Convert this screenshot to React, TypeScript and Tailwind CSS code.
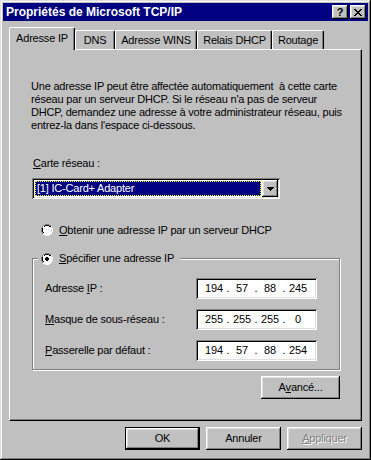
const raised =
  'shadow-[inset_-1px_-1px_0_#000,inset_1px_1px_0_#fff,inset_-2px_-2px_0_#808080,inset_2px_2px_0_#dfdfdf]';
const sunken =
  'shadow-[inset_1px_1px_0_#808080,inset_-1px_-1px_0_#fff,inset_2px_2px_0_#000,inset_-2px_-2px_0_#dfdfdf]';

function Radio({ checked }: { checked?: boolean }) {
  return (
    <svg width="12" height="12" viewBox="0 0 12 12" className="shrink-0">
      {/* outer ring: dark top-left, white bottom-right */}
      <path d="M4 0h4v1h2v1h1v2h1v4h-1v2h-1v1h-2v1h-4v-1h-2v-1h-1v-2h-1v-4h1v-2h1v-1h2z" fill="#fff" />
      <path d="M4 0h4v1h2v1h-2v-1h-4v1h-2v2h-1v4h1v2h-1v-2h-1v-4h1v-2h1v-1h2z" fill="#808080" />
      <path d="M4 1h4v1h2v1h-2v-1h-4v1h-2v1h0v4h1v1h-1v-1h-1v-4h1v-1h1v-1h1z" fill="#000" />
      <path d="M10 3h1v1h0v4h-1v2h-2v1h-4v-1h-2v-1h1v1h1v1h4v-1h2v-2h0v-4z" fill="#dfdfdf" />
      <path d="M4 2h4v1h1v1h1v4h-1v1h-1v1h-4v-1h-1v-1h-1v-4h1v-1h1z" fill="#fff" />
      {checked && <path d="M5 4h2v1h1v2h-1v1h-2v-1h-1v-2h1z" fill="#000" />}
    </svg>
  );
}

function IpField({ parts }: { parts: string[] }) {
  return (
    <div className={`w-[121px] h-[21px] bg-white ${sunken} flex items-center pl-[6px]`}>
      {parts.map((p, i) => (
        <div key={i} className="flex items-center">
          <span className="w-[24px] text-center">{p}</span>
          {i < 3 && <span className="w-[4px] text-center">.</span>}
        </div>
      ))}
    </div>
  );
}

function Button({
  children,
  isDefault,
  disabled,
  className = '',
}: {
  children: React.ReactNode;
  isDefault?: boolean;
  disabled?: boolean;
  className?: string;
}) {
  return (
    <div
      className={`h-[23px] flex items-center justify-center ${
        isDefault
          ? 'border border-black shadow-[inset_-1px_-1px_0_#000,inset_1px_1px_0_#fff,inset_-2px_-2px_0_#808080,inset_2px_2px_0_#dfdfdf]'
          : raised
      } ${disabled ? 'text-[#808080] [text-shadow:1px_1px_0_#fff]' : ''} ${className}`}
    >
      {children}
    </div>
  );
}

export default function App() {
  const tabs = ['DNS', 'Adresse WINS', 'Relais DHCP', 'Routage'];
  const tabWidths = ['w-[40px]', 'w-[82px]', 'w-[75px]', 'w-[52px]'];

  return (
    <div
      className={`w-[371px] h-[460px] bg-[#c0c0c0] p-[3px] text-[11px] leading-[13px] tracking-[-0.2px] text-black font-['Liberation_Sans',Arial,sans-serif] shadow-[inset_-1px_-1px_0_#000,inset_1px_1px_0_#dfdfdf,inset_-2px_-2px_0_#808080,inset_2px_2px_0_#fff]`}
    >
      {/* Title bar */}
      <div className="h-[18px] bg-[#000080] flex items-center pl-[3px] pr-[2px]">
        <span className="text-white font-bold text-[12px] tracking-[0px] flex-1">Propriétés de Microsoft TCP/IP</span>
        <div className="flex gap-[2px]">
          <div className={`w-[16px] h-[14px] bg-[#c0c0c0] ${raised} flex items-center justify-center font-bold text-[11px] leading-none`}>
            ?
          </div>
          <div className={`w-[16px] h-[14px] bg-[#c0c0c0] ${raised} flex items-center justify-center`}>
            <svg width="8" height="7" viewBox="0 0 8 7">
              <path d="M0 0h2v1h1v1h2v-1h1v-1h2v1h-1v1h-1v1h-1v1h1v1h1v1h1v1h-2v-1h-1v-1h-2v1h-1v1h-2v-1h1v-1h1v-1h1v-1h-1v-1h-1v-1h-1z" fill="#000" />
            </svg>
          </div>
        </div>
      </div>

      <div className="px-[6px] pt-[6px]">
        {/* Tabs */}
        <div className="flex items-end h-[22px]">
          <div className="relative z-10 -mb-px w-[66px] h-[23px] bg-[#c0c0c0] border-t border-l border-white border-r border-r-black rounded-t-[2px] shadow-[inset_-1px_0_0_#808080] flex items-start justify-center pt-[4px]">
            Adresse IP
          </div>
          {tabs.map((t, i) => (
            <div
              key={t}
              className={`${tabWidths[i]} h-[19px] border-t border-l border-white border-r border-r-black rounded-t-[2px] shadow-[inset_-1px_0_0_#808080] flex items-start justify-center pt-[3px]`}
            >
              {t}
            </div>
          ))}
        </div>

        {/* Panel */}
        <div className="w-[353px] h-[372px] border-t border-l border-white border-r border-b border-r-black border-b-black shadow-[inset_-1px_-1px_0_#808080] pt-[30px] pl-[21px]">
          <p className="whitespace-pre">
            {'Une adresse IP peut être affectée automatiquement  à cette carte\nréseau par un serveur DHCP. Si le réseau n\'a pas de serveur\nDHCP, demandez une adresse à votre administrateur réseau, puis\nentrez-la dans l\'espace ci-dessous.'}
          </p>

          <div className="mt-[25px] pl-[2px]">
            <span className="underline">C</span>arte réseau :
          </div>

          <div className={`mt-[8px] ml-[1px] w-[248px] h-[21px] bg-white ${sunken} p-[2px] flex`}>
            <div className="flex-1 m-[1px] bg-[#000080] border border-dotted border-[#ffff00] text-white flex items-center pl-[1px]">
              [1] IC-Card+ Adapter
            </div>
            <div className={`w-[16px] h-[17px] bg-[#c0c0c0] ${raised} flex items-center justify-center`}>
              <svg width="7" height="4" viewBox="0 0 7 4">
                <path d="M0 0h7v1h-1v1h-1v1h-1v1h-1v-1h-1v-1h-1v-1h-1z" fill="#000" />
              </svg>
            </div>
          </div>

          <div className="mt-[24px] ml-[10px] flex items-center gap-[6px] h-[14px]">
            <Radio />
            <span>
              <span className="underline">O</span>btenir une adresse IP par un serveur DHCP
            </span>
          </div>

          {/* Group box */}
          <div className="relative mt-[21px] ml-[1px] w-[308px] h-[112px] border border-[#808080] shadow-[inset_1px_1px_0_#fff,1px_1px_0_#fff] pt-[19px] pl-[12px]">
            <div className="absolute -top-[7px] left-[5px] bg-[#c0c0c0] flex items-center gap-[6px] px-[3px] pr-[6px] h-[13px]">
              <Radio checked />
              <span>
                <span className="underline">S</span>pécifier une adresse IP
              </span>
            </div>

            <div className="flex flex-col gap-[10px]">
              {[
                { label: <>Adresse <span className="underline">I</span>P :</>, parts: ['194', '57', '88', '245'] },
                { label: <><span className="underline">M</span>asque de sous-réseau :</>, parts: ['255', '255', '255', '0'] },
                { label: <><span className="underline">P</span>asserelle par défaut :</>, parts: ['194', '57', '88', '254'] },
              ].map((row, i) => (
                <div key={i} className="flex items-center">
                  <span className="w-[151px]">{row.label}</span>
                  <IpField parts={row.parts} />
                </div>
              ))}
            </div>
          </div>

          <div className="mt-[6px] w-[309px] flex justify-end">
            <Button className="w-[79px]">
              A<span className="underline">v</span>ancé...
            </Button>
          </div>
        </div>

        {/* Bottom buttons */}
        <div className="mt-[6px] flex justify-end gap-[6px] pr-0">
          <Button isDefault className="w-[75px]">OK</Button>
          <Button className="w-[75px]">Annuler</Button>
          <Button disabled className="w-[75px]">
            <span>
              <span className="underline">A</span>ppliquer
            </span>
          </Button>
        </div>
      </div>
    </div>
  );
}
